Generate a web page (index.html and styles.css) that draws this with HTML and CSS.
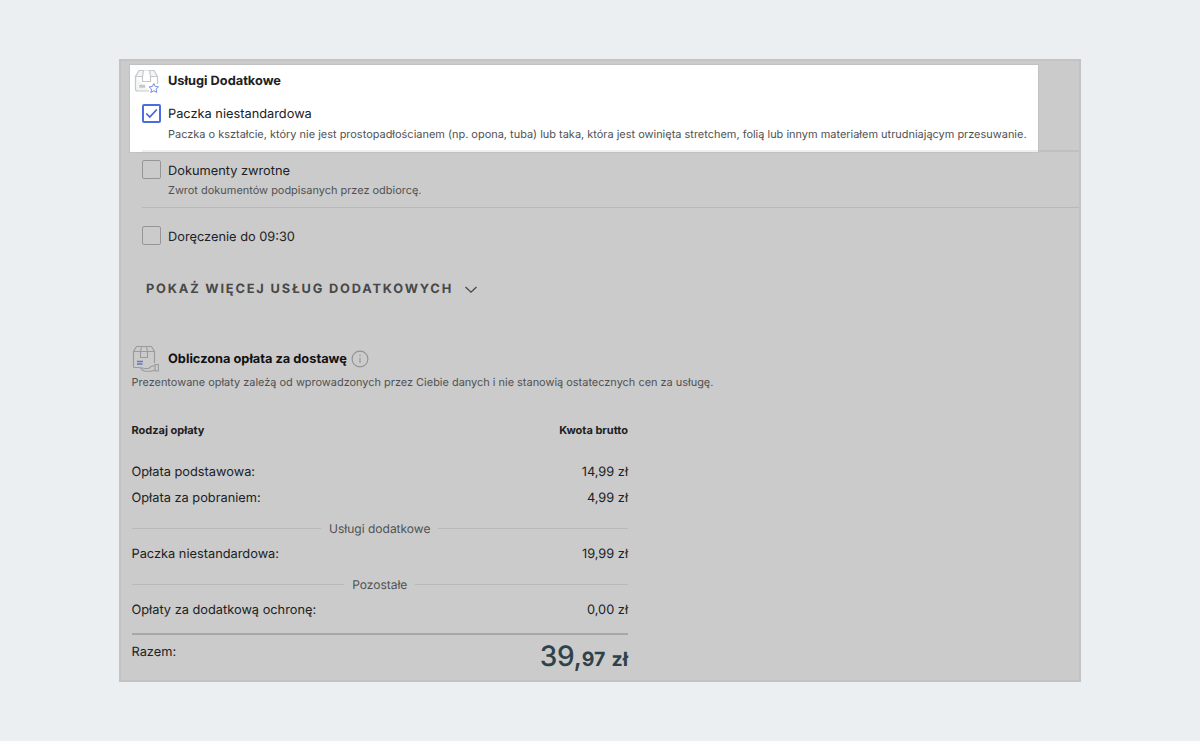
FILE: index.html
```html
<!DOCTYPE html>
<html lang="pl">
<head>
<meta charset="utf-8">
<title>Usługi Dodatkowe</title>
<link rel="stylesheet" href="styles.css">
</head>
<body>
<main class="panel">
  <div class="top">
    <section class="spotlight">
      <div class="heading heading-extra">
        <svg class="box-icon" width="28" height="28" viewBox="0 0 28 28" fill="none" stroke="#c5c9cc" stroke-width="1.2">
          <path d="M2.500 9.500V22Q2.500 24 4.500 24H16M24.500 17V9.500L21 3.500H6L2.500 9.500H24.500" fill="#f4f5f5"/>
          <path d="M10.500 3.500L9.500 9.500V14.500H17.500V9.500L16.500 3.500" fill="#fff"/>
          <path d="M6.500 18H12V20.500H6.500Z" fill="#c5c9cc" stroke-width=".5"/>
          <path d="M20.800 16.500l1.400 3 3.300.4-2.400 2.200.6 3.300-2.900-1.600-2.900 1.600.6-3.300-2.400-2.200 3.300-.4z" fill="#fff" stroke="#7189e6" stroke-width="1"/>
        </svg>
        <h2 class="title">Usługi Dodatkowe</h2>
      </div>
      <div class="option">
        <span class="check checked"><svg width="15" height="15" viewBox="0 0 15 15" fill="none" stroke="#4263dc" stroke-width="1.700"><path d="M2.300 7.500l3.500 3.500 7-7.500"/></svg></span>
        <span class="label">Paczka niestandardowa</span>
      </div>
      <p class="hint hint-long">Paczka o kształcie, który nie jest prostopadłościanem (np. opona, tuba) lub taka, która jest owinięta stretchem, folią lub innym materiałem utrudniającym przesuwanie.</p>
      <div class="spot-line"></div>
    </section>
    <div class="line-tail"></div>
  </div>

  <div class="option option-docs"><span class="check"></span><span class="label">Dokumenty zwrotne</span></div>
  <p class="hint hint-docs">Zwrot dokumentów podpisanych przez odbiorcę.</p>
  <div class="divider"></div>
  <div class="option option-time"><span class="check"></span><span class="label">Doręczenie do 09:30</span></div>

  <div class="more"><span class="more-text">POKAŻ WIĘCEJ USŁUG DODATKOWYCH</span>
    <svg width="14" height="10" viewBox="0 0 14 10" fill="none" stroke="#484848" stroke-width="1.300"><path d="M1.500 3l5.500 5.200L12.500 3"/></svg>
  </div>

  <div class="heading heading-fee">
    <svg class="box-icon" width="28" height="28" viewBox="0 0 28 28" fill="none" stroke="#999c9f" stroke-width="1.100">
      <path d="M8 22.500H3.500Q2.500 22.500 2.500 21.500V6.500L5.500 1.500H20.500L23.500 6.500V18M2.500 6.500H23.500M10.500 1.500L9.500 6.500V12.500H16.500V6.500L15.500 1.500"/>
      <path d="M6 16.500H12M6 19H11.500" stroke="#6076c6" stroke-width="1.300"/>
      <path d="M24 20.500L20 21.500L17.500 23.500H13.500L9 22.500C11 25.500 13 26.200 15 26.200H20L24 25M14 23.500H18.500M24 19.500H27.400V26H24Z"/>
    </svg>
    <h2 class="title title-fee">Obliczona opłata za dostawę</h2>
    <svg class="info" width="18" height="18" viewBox="0 0 18 18" fill="none" stroke="#929292" stroke-width="1.100"><circle cx="9" cy="9" r="7.900"/><path d="M9 7.700V13M9 4.800V6.200"/></svg>
  </div>
  <p class="note">Prezentowane opłaty zależą od wprowadzonych przez Ciebie danych i nie stanowią ostatecznych cen za usługę.</p>

  <section class="fees">
    <div class="row head"><span>Rodzaj opłaty</span><span>Kwota brutto</span></div>
    <div class="row first"><span>Opłata podstawowa:</span><span>14,99 zł</span></div>
    <div class="row second"><span>Opłata za pobraniem:</span><span>4,99 zł</span></div>
    <div class="group group-extra"><span>Usługi dodatkowe</span></div>
    <div class="row"><span>Paczka niestandardowa:</span><span>19,99 zł</span></div>
    <div class="group group-rest"><span>Pozostałe</span></div>
    <div class="row"><span>Opłaty za dodatkową ochronę:</span><span>0,00 zł</span></div>
    <div class="total"><span class="total-label">Razem:</span><span class="sum"><span class="whole">39,</span><span class="cents">97 zł</span></span></div>
  </section>
</main>
</body>
</html>
```
FILE: styles.css
```css
* { box-sizing: border-box; }
body {
  margin: 0;
  height: 741px;
  padding: 59px 119px 0;
  background: #ebeff2;
  font-family: Inter, "Liberation Sans", sans-serif;
  font-size: 12.8px;
  color: #202122;
  overflow: hidden;
  text-rendering: geometricPrecision;
}
h2, p { margin: 0; white-space: nowrap; }
svg { display: block; flex: none; }
span { white-space: nowrap; }
.panel { width: 962px; height: 623px; border: 2px solid #c3c3c3; background: #cbcbcb; }
.top { display: flex; padding: 3px 0 0 8px; height: 92px; }
.spotlight { width: 910px; height: 89px; background: #fff; border: 1px solid #c1c1c1; flex: none; }
.line-tail { flex: 1; height: 88px; border-bottom: 2px solid #c0c0c0; }
.heading { display: flex; align-items: center; height: 28px; }
.heading-extra { margin: 2px 0 0 3px; }
.title { font-size: 12.8px; line-height: 20px; font-weight: 700; margin-left: 7px; }
.heading-extra .title { margin-top: 1px; }
.option { display: flex; align-items: center; height: 20px; margin-left: 21px; }
.spotlight .option { margin: 8px 0 0 12px; }
.label { padding-top: 2px; }
.check { width: 19px; height: 19px; margin-right: 7px; border: 1.500px solid #969696; border-radius: 2px; flex: none; }
.option-docs .check, .option-time .check { margin-top: -1px; }
.checked { border: 2px solid #4c6ce0; }
.hint { margin-left: 47px; font-size: 10.960px; line-height: 16px; color: #505152; }
.spotlight .hint { margin: 3px 0 0 38px; }
.spot-line { height: 2px; margin: 8px 0 0 12px; background: #efefef; }
.option-docs { margin-top: 7px; }
.hint-docs { margin-top: 2px; }
.divider { height: 1px; margin: 9px 0 18px 21px; background: #b8b8b8; }
.more { display: flex; align-items: center; gap: 11px; height: 20px; margin: 33px 0 0 25px; }
.more-text { padding-top: 1px; font-weight: 700; letter-spacing: 1.820px; color: #484848; }
.heading-fee { margin: 46px 0 0 10px; }
.heading-fee .title { color: #111; margin-left: 9px; padding-top: 2px; }
.info { margin-left: 4px; }
.note { margin: 1px 0 0 10.500px; font-size: 10.950px; line-height: 16px; color: #505152; }
.fees { width: 496.500px; margin: 30px 0 0 10.500px; }
.row { display: flex; justify-content: space-between; line-height: 20px; }
.head { font-size: 11px; font-weight: 700; }
.first { margin-top: 23px; }
.second { margin-top: 6px; }
.group { display: flex; align-items: center; gap: 8px; height: 20px; color: #505152; font-size: 12px; }
.group::before, .group::after { content: ""; flex: 1; height: 1px; background: #b9b9b9; }
.group-extra { margin: 9px 0 7px; }
.group-rest { margin: 9px 0 7px; }
.total { display: flex; justify-content: space-between; border-top: 2px solid #a7a7a7; margin-top: 12px; padding-top: 7px; line-height: 20px; }
.total-label { padding-top: 1px; }
.sum { color: #2f424a; line-height: 28px; }
.whole { font-size: 28px; font-weight: 500; letter-spacing: -.3px; }
.cents { font-size: 19.500px; font-weight: 700; word-spacing: 1.500px; }
```
